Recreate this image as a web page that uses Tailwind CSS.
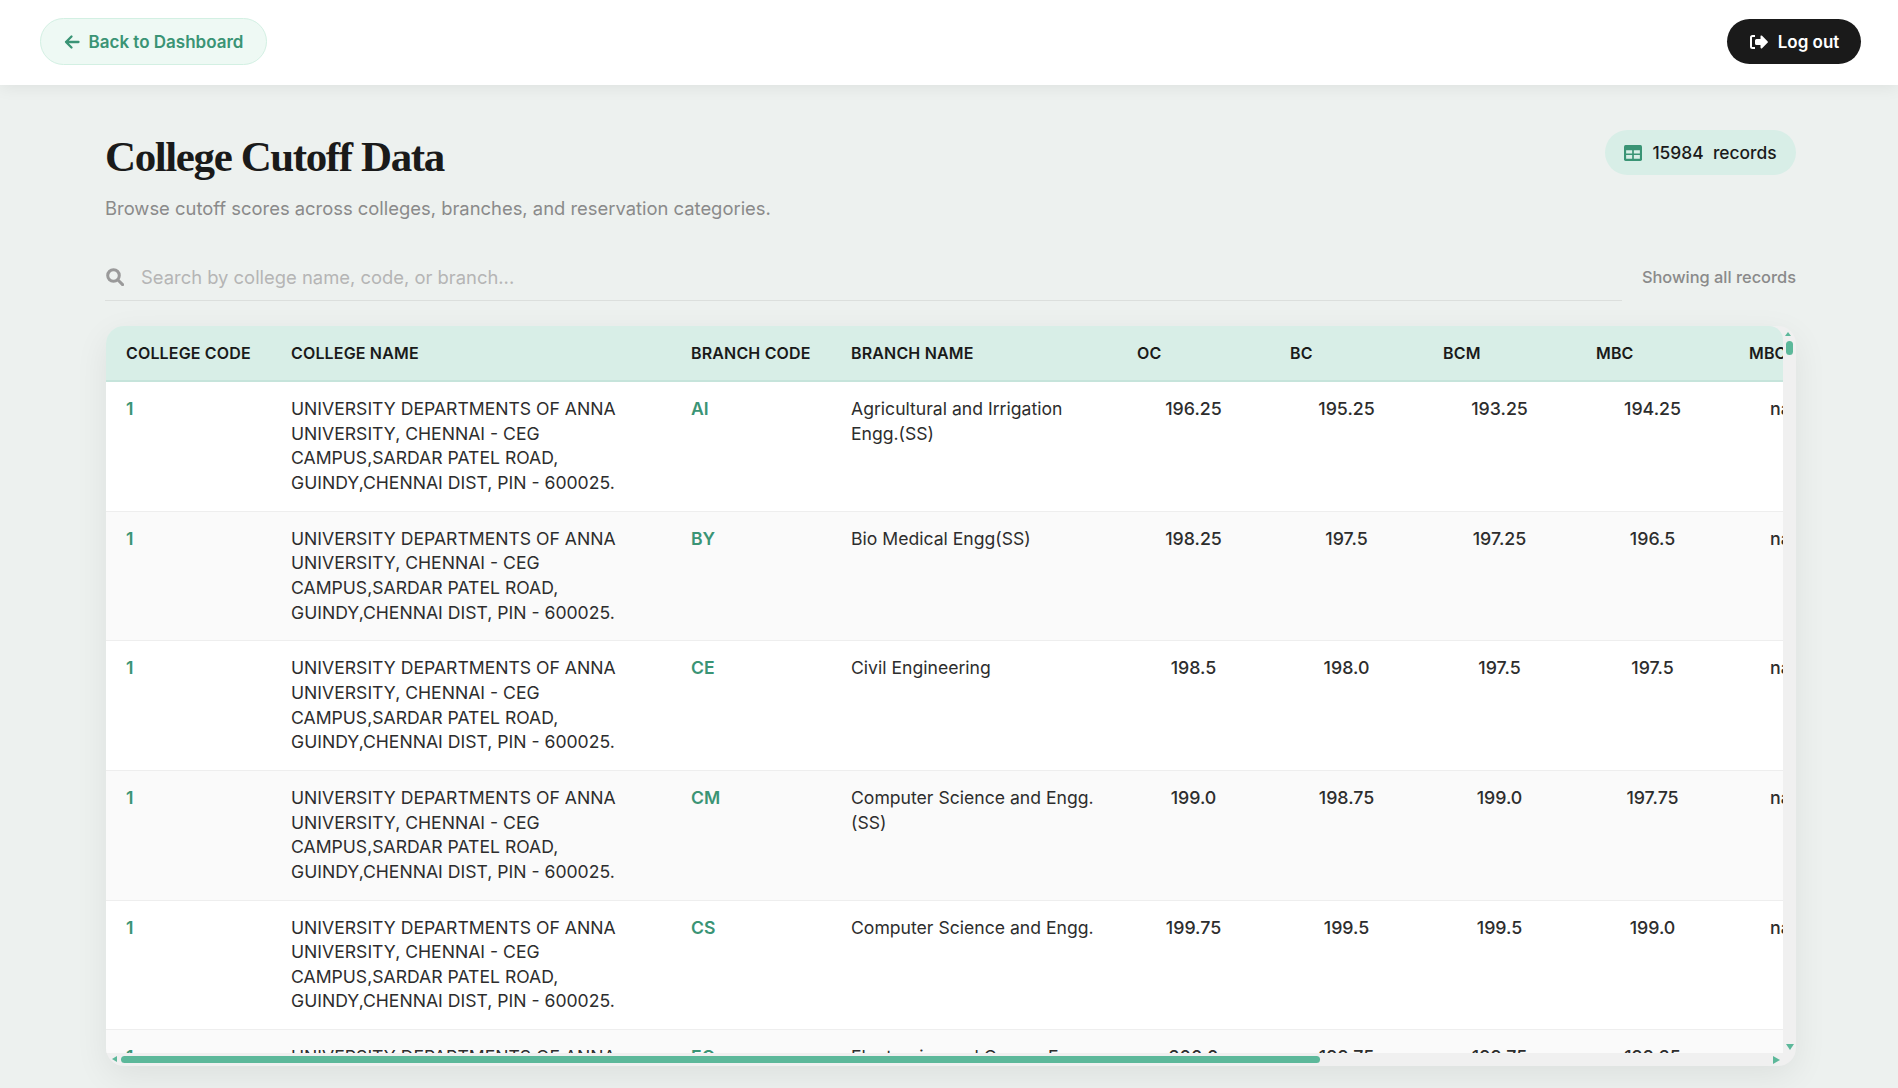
<!DOCTYPE html>
<html lang="en">
<head>
  <meta charset="UTF-8" />
  <meta name="viewport" content="width=device-width, initial-scale=1.0" />
  <title>College Cutoff Data</title>
  <script src="https://cdn.jsdelivr.net/npm/@tailwindcss/browser@4"></script>
</head>
<body class="bg-[#edf1ef] h-[1088px] overflow-hidden font-['Inter',sans-serif] text-[#1a1a1a]">

  <!-- Top bar -->
  <header class="h-[85px] pb-[2px] bg-white flex items-center justify-between pl-10 pr-[37px] shadow-[0_2px_16px_rgba(0,0,0,0.07)]">
    <a class="h-[47px] w-[227px] flex items-center justify-center gap-[9px] rounded-full bg-[#eef9f4] border border-[#d3f0e3] text-[#3a9475] text-[17px] font-semibold">
      <svg class="w-[16px] h-[16px]" viewBox="0 0 16 16" fill="none" stroke="currentColor" stroke-width="2.300" stroke-linecap="round" stroke-linejoin="round"><path d="M14.5 8H2M7.5 2.5 2 8l5.500 5.500"/></svg>
      <span class="pt-[2px]">Back to Dashboard</span>
    </a>
    <button class="h-[45px] w-[134px] flex items-center justify-center gap-[10px] rounded-full bg-[#1a1a1a] text-white text-[17px] font-semibold">
      <svg class="w-[19px] h-[16px]" viewBox="0 0 19 16" fill="currentColor"><path d="M6 1H3.500A2.500 2.500 0 0 0 1 3.500v9A2.500 2.500 0 0 0 3.500 15H6v-2H3.500a.5.5 0 0 1-.5-.5v-9a.5.5 0 0 1 .5-.5H6z"/><path d="M12 1.500a1 1 0 0 1 1.100.2l5.400 5.500a1.100 1.100 0 0 1 0 1.600l-5.400 5.500A1 1 0 0 1 11.500 13.600V11H7.500A1.500 1.500 0 0 1 6 9.500v-3A1.500 1.500 0 0 1 7.500 5h4V2.400a1 1 0 0 1 .5-.9z"/></svg>
      <span class="pt-[2px]">Log out</span>
    </button>
  </header>

  <main class="pl-[105px] pr-[102px]">
    <!-- Title -->
    <div class="flex items-start justify-between pt-[45px]">
      <div>
        <h1 class="text-[43px] leading-[54px] font-bold font-['Liberation_Serif',serif] tracking-[-1.4px] text-[#1a1a1a]">College Cutoff Data</h1>
        <p class="mt-[12px] text-[18.4px] leading-[24px] text-[#8a8a8a]">Browse cutoff scores across colleges, branches, and reservation categories.</p>
      </div>
      <div class="h-[45px] w-[191px] flex items-center justify-center gap-[10px] rounded-full bg-[#d8eee7] text-[17.4px] font-medium">
        <svg class="w-[18px] h-[16px]" viewBox="0 0 17 15"><rect width="17" height="15" rx="1.500" fill="#3a9475"/><path d="M2 5h5.700v3H2zM9.300 5H15v3H9.300zM2 9.500h5.700V13H2zM9.300 9.500H15V13H9.300z" fill="#d8eee7"/></svg>
        <span class="pt-[2px] whitespace-pre">15984  records</span>
      </div>
    </div>

    <!-- Search -->
    <div class="flex items-center gap-5 mt-[34px]">
      <div class="flex-1 h-[47px] flex items-center gap-[17px] pl-px border-b border-[#dcdfdd]">
        <svg class="w-[18px] h-[18px] text-[#9a9a9a]" viewBox="0 0 18 18" fill="none" stroke="currentColor" stroke-width="3" stroke-linecap="round"><circle cx="7.500" cy="7.500" r="5.800"/><path d="M12 12l4.600 4.600"/></svg>
        <span class="pt-[2px] text-[18.4px] text-[#b5b5b5]">Search by college name, code, or branch...</span>
      </div>
      <span class="text-[16.4px] font-medium text-[#8a8a8a]">Showing all records</span>
    </div>

    <!-- Table card -->
    <div class="relative ml-px mt-[25px] h-[740px] rounded-[18px] overflow-hidden bg-[#f0f0f0] shadow-[0_10px_34px_rgba(0,0,0,0.07)]">
      <div class="mr-[13px] h-[727px] overflow-hidden rounded-tr-[14px]">
        <table class="table-fixed w-[1856px] border-collapse text-[17.6px] text-[#2d2d2d]">
          <colgroup>
            <col class="w-[165px]" /><col class="w-[400px]" /><col class="w-[160px]" /><col class="w-[286px]" />
            <col class="w-[153px]" /><col class="w-[153px]" /><col class="w-[153px]" /><col class="w-[153px]" /><col class="w-[233px]" />
          </colgroup>
          <thead>
            <tr class="h-[55px] bg-[#d8eee7] border-b-2 border-[#c6e4db] text-left text-[16px] tracking-[0.16px] text-[#1a1a1a] whitespace-nowrap">
              <th class="pl-5 font-semibold">COLLEGE CODE</th>
              <th class="pl-5 font-semibold">COLLEGE NAME</th>
              <th class="pl-5 font-semibold">BRANCH CODE</th>
              <th class="pl-5 font-semibold">BRANCH NAME</th>
              <th class="pl-5 font-semibold">OC</th>
              <th class="pl-5 font-semibold">BC</th>
              <th class="pl-5 font-semibold">BCM</th>
              <th class="pl-5 font-semibold">MBC</th>
              <th class="pl-5 font-semibold">MBCA</th>
            </tr>
          </thead>
          <tbody id="rows"></tbody>
        </table>
      </div>

      <!-- Scrollbars -->
      <div class="absolute left-[6px] bottom-[4px] w-0 h-0 border-y-[3px] border-y-transparent border-r-[5px] border-r-[#5cb89a]"></div>
      <div class="absolute left-[15px] bottom-[3px] w-[1199px] h-[7px] rounded-full bg-[#5cb89a]"></div>
      <div class="absolute right-[16px] bottom-[2px] w-0 h-0 border-y-[4px] border-y-transparent border-l-[7px] border-l-[#5cb89a]"></div>
      <div class="absolute right-[5px] top-[6px] w-0 h-0 border-x-[3px] border-x-transparent border-b-[4px] border-b-[#5cb89a]"></div>
      <div class="absolute right-[3px] top-[15px] w-[7px] h-[14px] rounded-full bg-[#5cb89a]"></div>
      <div class="absolute right-[2px] bottom-[16px] w-0 h-0 border-x-[4px] border-x-transparent border-t-[6px] border-t-[#5cb89a]"></div>
    </div>
  </main>

  <script>
    const college = 'UNIVERSITY DEPARTMENTS OF ANNA UNIVERSITY, CHENNAI - CEG CAMPUS,SARDAR PATEL ROAD, GUINDY,CHENNAI DIST, PIN - 600025.';
    const data = [
      ['AI', 'Agricultural and Irrigation Engg.(SS)', '196.25', '195.25', '193.25', '194.25'],
      ['BY', 'Bio Medical Engg(SS)', '198.25', '197.5', '197.25', '196.5'],
      ['CE', 'Civil Engineering', '198.5', '198.0', '197.5', '197.5'],
      ['CM', 'Computer Science and Engg.(SS)', '199.0', '198.75', '199.0', '197.75'],
      ['CS', 'Computer Science and Engg.', '199.75', '199.5', '199.5', '199.0'],
      ['EC', 'Electronics and Comm. Engg.', '200.0', '199.75', '199.75', '199.25'],
    ];

    document.getElementById('rows').innerHTML = data.map((row, i) => `
      <tr class="${i % 2 ? 'bg-[#fafafa]' : 'bg-white'} border-b border-[#eeeeee] align-top leading-[24.65px]">
        <td class="py-[15px] pl-5 font-semibold text-[#3a9475]">1</td>
        <td class="py-[15px] pl-5 pr-10">${college}</td>
        <td class="py-[15px] pl-5 font-semibold text-[#3a9475]">${row[0]}</td>
        <td class="py-[15px] pl-5 pr-5">${row[1]}</td>
        <td class="py-[15px] text-center text-[17.8px] font-[550]">${row[2]}</td>
        <td class="py-[15px] text-center text-[17.8px] font-[550]">${row[3]}</td>
        <td class="py-[15px] text-center text-[17.8px] font-[550]">${row[4]}</td>
        <td class="py-[15px] text-center text-[17.8px] font-[550]">${row[5]}</td>
        <td class="py-[15px] pl-[41px] text-[17.8px] font-[550]">nan</td>
      </tr>`).join('');
  </script>
</body>
</html>
